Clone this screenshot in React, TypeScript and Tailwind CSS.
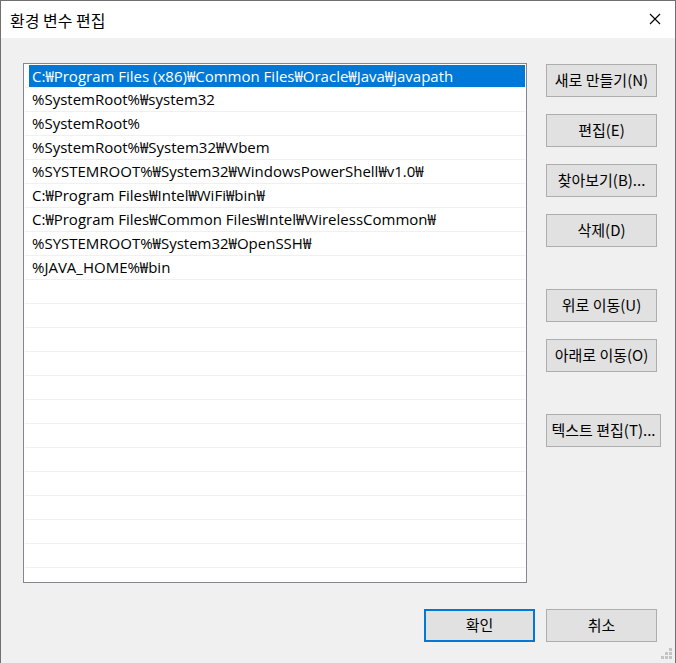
import React from "react";

const paths = [
  "C:₩Program Files (x86)₩Common Files₩Oracle₩Java₩javapath",
  "%SystemRoot%₩system32",
  "%SystemRoot%",
  "%SystemRoot%₩System32₩Wbem",
  "%SYSTEMROOT%₩System32₩WindowsPowerShell₩v1.0₩",
  "C:₩Program Files₩Intel₩WiFi₩bin₩",
  "C:₩Program Files₩Common Files₩Intel₩WirelessCommon₩",
  "%SYSTEMROOT%₩System32₩OpenSSH₩",
  "%JAVA_HOME%₩bin",
];

const rows = [...paths, ...Array(12).fill("")];

const font = { fontFamily: '"Open Sans", "Noto Sans CJK KR", sans-serif' };
const kr = { fontFamily: '"Noto Sans CJK KR", sans-serif' };

const Btn = ({ label, wide, primary }: { label: string; wide?: boolean; primary?: boolean }) => (
  <button
    className={
      "h-[33px] bg-[#e1e1e1] text-[15px] text-black flex items-center justify-center whitespace-nowrap " +
      (wide ? "w-[115px] " : "w-[111px] ") +
      (primary ? "border-2 border-[#0078d7]" : "border border-[#adadad]")
    }
  >
    {label}
  </button>
);

export default function App() {
  return (
    <div
      className="relative w-[676px] h-[663px] border-t border-x border-[#707070] bg-[#f0f0f0] flex flex-col select-none"
      style={font}
    >
      {/* title bar */}
      <div className="h-[37px] bg-white flex items-center justify-between pl-[9px] pr-[14px]">
        <span className="text-[16px] text-black" style={kr}>
          환경 변수 편집
        </span>
        <svg width="12" height="12" viewBox="0 0 12 12" className="mt-[-1px]">
          <path d="M1 1L11 11M11 1L1 11" stroke="#000" strokeWidth="1.1" fill="none" />
        </svg>
      </div>

      <div className="flex pt-[25px] pl-[22px]">
        {/* list */}
        <div className="w-[504px] h-[520px] border border-[#828790] bg-white overflow-hidden">
          {rows.map((p, i) => (
            <div key={i} className="h-[24px] mx-[1px] border-b border-[#f0f0f0] flex">
              {i === 0 ? (
                <div className="ml-[4px] mt-[1px] h-[22px] flex-1 bg-[#0078d7] text-white text-[15px] leading-[22px] pl-[3px] whitespace-nowrap">
                  {p}
                </div>
              ) : (
                <div className="pl-[7px] text-[15px] leading-[23px] text-black whitespace-nowrap">{p}</div>
              )}
            </div>
          ))}
        </div>

        {/* side buttons */}
        <div className="ml-[19px] mt-[1px] flex flex-col" style={kr}>
          <Btn label="새로 만들기(N)" />
          <div className="h-[17px]" />
          <Btn label="편집(E)" />
          <div className="h-[17px]" />
          <Btn label="찾아보기(B)..." />
          <div className="h-[17px]" />
          <Btn label="삭제(D)" />
          <div className="h-[42px]" />
          <Btn label="위로 이동(U)" />
          <div className="h-[17px]" />
          <Btn label="아래로 이동(O)" />
          <div className="h-[42px]" />
          <Btn label="텍스트 편집(T)..." wide />
        </div>
      </div>

      {/* bottom buttons */}
      <div className="flex justify-end gap-[11px] pt-[26px] pr-[18px]" style={kr}>
        <Btn label="확인" primary />
        <Btn label="취소" />
      </div>

      {/* resize grip */}
      <svg width="14" height="14" viewBox="0 0 14 14" className="absolute right-[2px] bottom-[1px]">
        {[
          [10, 0],
          [6, 4],
          [10, 4],
          [2, 8],
          [6, 8],
          [10, 8],
        ].map(([x, y], i) => (
          <rect key={i} x={x} y={y} width="3" height="3" fill="#c4c4c4" />
        ))}
      </svg>
    </div>
  );
}
